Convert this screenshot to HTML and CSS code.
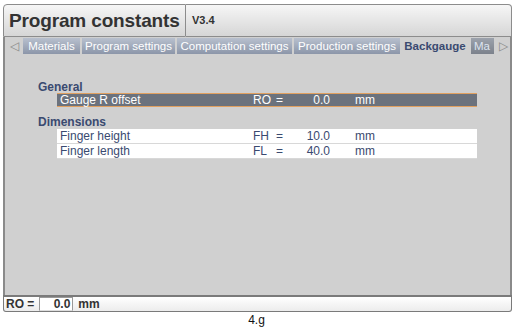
FILE: index.html
```html
<!DOCTYPE html>
<html lang="en">
<head>
    <meta charset="UTF-8" />
    <title>Program constants</title>
    <link rel="stylesheet" href="styles.css">
</head>
<body>
<div class="screen">
    <header class="top">
        <div class="title">Program constants</div>
        <div class="version">V3.4</div>
    </header>
    <nav class="tabs">
        <span class="arrow">&#9665;</span>
        <span class="tab tab-materials">Materials</span>
        <span class="tab tab-program">Program settings</span>
        <span class="tab tab-computation">Computation settings</span>
        <span class="tab tab-production">Production settings</span>
        <span class="tab tab-backgauge active">Backgauge</span>
        <span class="tab tab-more">Ma</span>
        <span class="arrow">&#9655;</span>
    </nav>
    <main class="panel">
        <div class="group">General</div>
        <div class="row selected">
            <span class="name">Gauge R offset</span>
            <span class="code"><span class="sym">RO</span>=</span>
            <span class="value">0.0</span>
            <span class="unit">mm</span>
        </div>
        <div class="group second">Dimensions</div>
        <div class="row">
            <span class="name">Finger height</span>
            <span class="code"><span class="sym">FH</span>=</span>
            <span class="value">10.0</span>
            <span class="unit">mm</span>
        </div>
        <div class="row">
            <span class="name">Finger length</span>
            <span class="code"><span class="sym">FL</span>=</span>
            <span class="value">40.0</span>
            <span class="unit">mm</span>
        </div>
    </main>
    <footer class="status">
        <span>RO =</span>
        <span class="field">0.0</span>
        <span>mm</span>
    </footer>
</div>
<div class="page-id">4.g</div>
</body>
</html>
```

FILE: styles.css
```css
* {
    margin: 0;
    padding: 0;
    box-sizing: border-box;
}
html, body {
    background: #fff;
    font-family: "Liberation Sans", Arial, sans-serif;
    color: #333;
}
.screen {
    width: 509px;
    margin: 4px 0 0 3px;
}
.top {
    display: flex;
    height: 33px;
}
.title {
    width: 183px;
    border: 1px solid #8c8c8c;
    border-radius: 4px 0 0 0;
    background: linear-gradient(#f6f6f6, #d6d6d6);
    font-size: 19px;
    font-weight: bold;
    letter-spacing: -0.15px;
    color: #333;
    padding: 5px 0 0 5px;
}
.version {
    flex: 1;
    border: 1px solid #8c8c8c;
    border-left: none;
    border-radius: 0 4px 0 0;
    background: linear-gradient(#f6f6f6, #d6d6d6);
    font-size: 11px;
    font-weight: bold;
    padding: 9px 0 0 6px;
}
.tabs {
    display: flex;
    align-items: stretch;
    height: 17px;
    background: #d0d0d0;
    border-left: 2px solid #8a8a8a;
    border-right: 2px solid #8a8a8a;
    padding-top: 1px;
    overflow: hidden;
}
.arrow {
    flex: none;
    color: #8a8a8a;
    font-size: 12px;
    width: 18px;
    text-align: center;
    line-height: 16px;
}
.arrow:last-child {
    width: 14px;
}
.tab {
    flex: none;
    background: linear-gradient(#b8c0ce, #8c96a9);
    color: #fff;
    font-size: 11.5px;
    line-height: 16px;
    text-align: center;
    margin-right: 2px;
    white-space: nowrap;
    overflow: hidden;
}
.tab-materials { width: 57px; }
.tab-program { width: 93px; }
.tab-computation { width: 115px; }
.tab-production { width: 106px; }
.tab-backgauge { width: 66px; }
.tab.active {
    background: #d0d0d0;
    color: #3a4a70;
    font-weight: bold;
    margin-right: 3px;
}
.tab.tab-more {
    width: 23px;
    text-align: left;
    padding-left: 3px;
    background: linear-gradient(#9ca2ac, #7c828c);
    color: #dde4f0;
}
.panel {
    height: 241px;
    background: #d0d0d0;
    border-left: 2px solid #8a8a8a;
    border-right: 2px solid #8a8a8a;
    padding-top: 27px;
}
.group {
    font-size: 12px;
    font-weight: bold;
    color: #3a4a70;
    padding-left: 33px;
    height: 12px;
    line-height: 12px;
}
.group.second {
    margin: 9px 0 1px;
}
.row {
    display: flex;
    margin-left: 52px;
    width: 420px;
    height: 15px;
    line-height: 14px;
    background: #fff;
    color: #3a4a70;
    font-size: 12px;
    border-bottom: 1px solid #d8d8d8;
}
.row.selected {
    background: #6b727d;
    color: #fff;
    border-top: 1px solid #e0a060;
    border-bottom: 1px solid #e0a060;
    height: 14px;
    line-height: 12px;
}
.name {
    width: 196px;
    padding-left: 3px;
}
.code {
    width: 45px;
}
.sym {
    display: inline-block;
    width: 23px;
}
.value {
    width: 32px;
    text-align: right;
}
.unit {
    padding-left: 25px;
}
.status {
    height: 17px;
    border: 1px solid #7a7a7a;
    border-top: 2px solid #7a7a7a;
    border-radius: 0 0 3px 3px;
    background: linear-gradient(#fff, #ececec);
    display: flex;
    align-items: center;
    font-size: 12px;
    font-weight: bold;
    padding-left: 2px;
    gap: 5px;
}
.field {
    width: 34px;
    height: 14px;
    border: 1px solid #999;
    border-bottom-color: #ddd;
    background: #fff;
    text-align: right;
    padding-right: 2px;
    line-height: 12px;
}
.page-id {
    text-align: center;
    font-size: 12px;
    line-height: 13px;
    color: #111;
    padding-top: 2px;
}
```
